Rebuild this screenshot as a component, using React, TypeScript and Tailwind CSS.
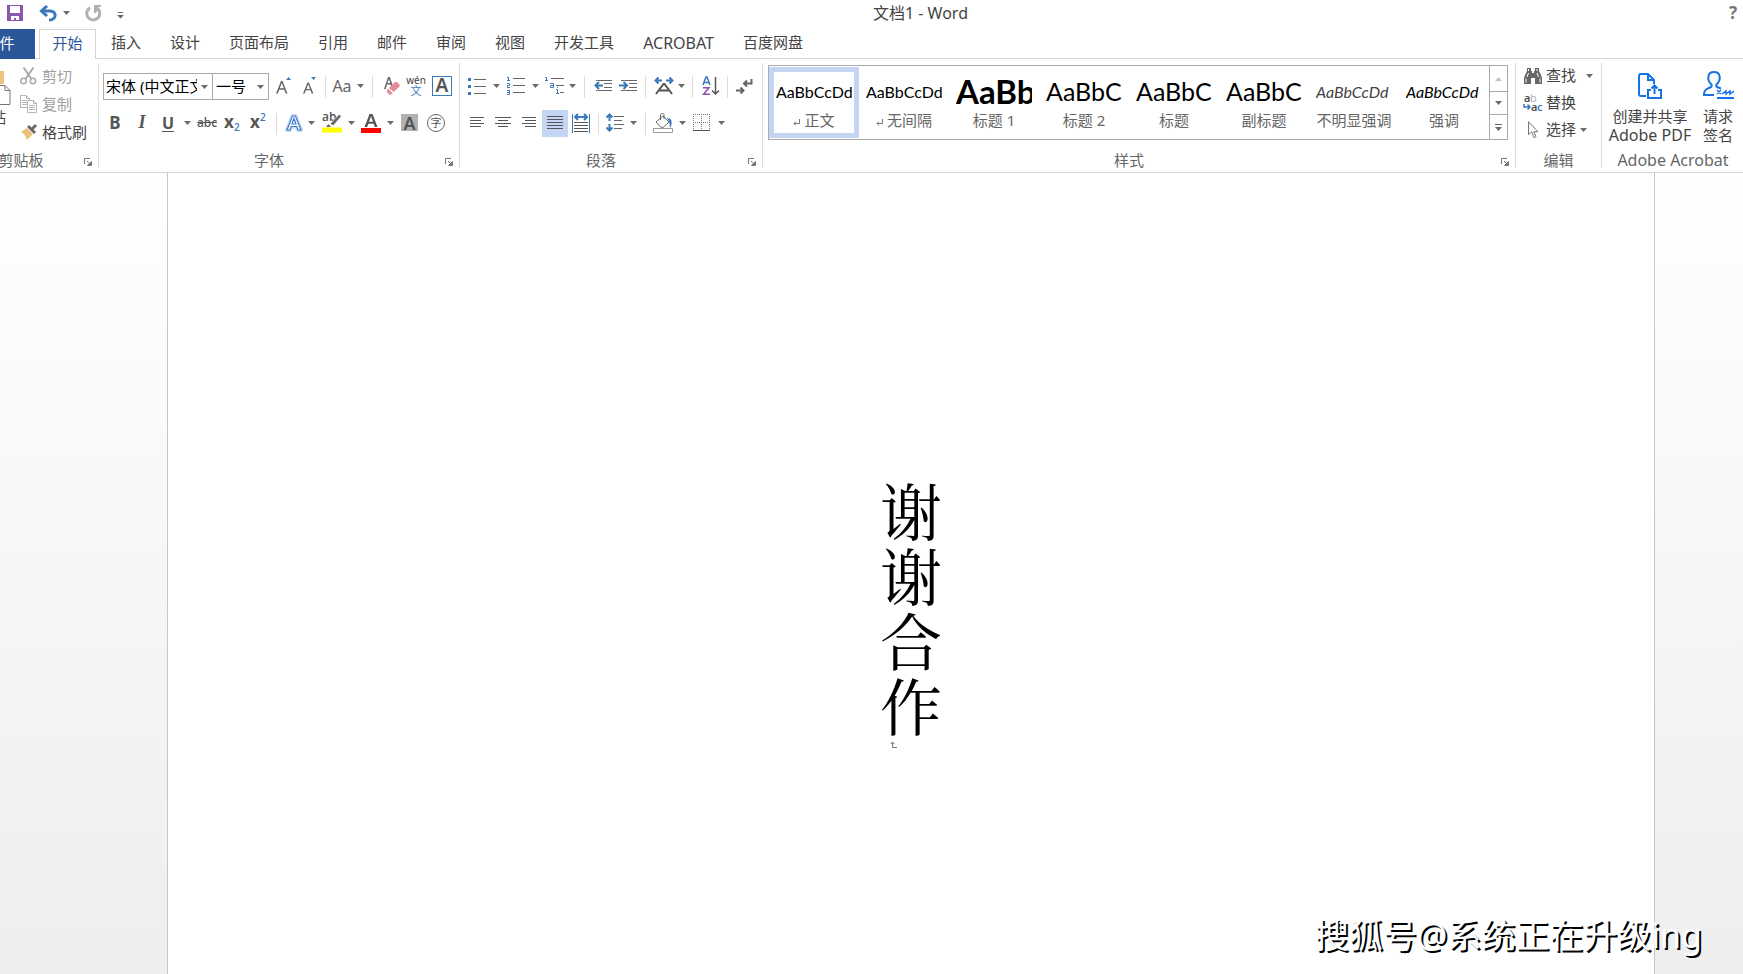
import React from 'react';
import clsx from 'clsx';

type Tone = 'gray' | 'light';

const Caret: React.FC<{ tone?: Tone }> = ({ tone = 'gray' }) => (
  <svg width="7" height="4" viewBox="0 0 7 4" className={tone === 'gray' ? 'text-[#6b6b6b]' : 'text-[#c3c3c3]'}>
    <path d="M0 0h7L3.5 4z" fill="currentColor" />
  </svg>
);

const Tool: React.FC<{ label: string; w: string; active?: boolean; children?: React.ReactNode }> = ({ label, w, active, children }) => (
  <button aria-label={label} title={label} className={clsx('flex h-[27px] shrink-0 items-center justify-center pb-[2px]', w, active && 'bg-[#c3d5f2]')}>
    {children}
  </button>
);

const Drop: React.FC<{ label: string; w: string }> = ({ label, w }) => (
  <button aria-label={label} className={clsx('flex h-[27px] shrink-0 items-center justify-center pb-[2px]', w)}>
    <Caret />
  </button>
);

const Split: React.FC<{ w: string }> = ({ w }) => (
  <div className={clsx('flex h-[22px] shrink-0 justify-center', w)}>
    <div className="w-px bg-[#dcdcdc]" />
  </div>
);

interface GroupProps {
  title: string;
  className?: string;
  launcher?: boolean;
  latin?: boolean;
  children: React.ReactNode;
}

const Group: React.FC<GroupProps> = ({ title, className, launcher, latin, children }) => (
  <section className={clsx('flex flex-col', className)}>
    <div className="flex-1">{children}</div>
    <div className="flex h-[25px] items-center">
      <h2 className={clsx('flex-1 whitespace-nowrap text-center leading-5 text-[#666]', latin ? 'text-[16px]' : 'text-[15px]')}>{title}</h2>
      {launcher && (
        <button aria-label={`${title}设置`} className="flex w-5 justify-center pt-1">
          <svg width="8" height="8" viewBox="0 0 8 8" fill="none" stroke="#777">
            <path d="M.5 6V.5H6M3 3l3 3M7.5 3.5v4h-4z" />
            <path d="M7 4v3H4z" fill="#777" />
          </svg>
        </button>
      )}
    </div>
  </section>
);

const Divider = () => <div className="my-1 w-px shrink-0 bg-[#dcdcdc]" />;

const tabs = ['插入', '设计', '页面布局', '引用', '邮件', '审阅', '视图', '开发工具', 'ACROBAT', '百度网盘'];

const styles = [
  { name: '正文', sample: 'AaBbCcDd', look: 'text-[16px] text-black', mark: true },
  { name: '无间隔', sample: 'AaBbCcDd', look: 'text-[16px] text-black', mark: true },
  { name: '标题 1', sample: 'AaBb', look: 'text-[33px] font-bold text-black' },
  { name: '标题 2', sample: 'AaBbC', look: 'text-[25px] text-black' },
  { name: '标题', sample: 'AaBbC', look: 'text-[25px] text-black' },
  { name: '副标题', sample: 'AaBbC', look: 'text-[25px] text-black' },
  { name: '不明显强调', sample: 'AaBbCcDd', look: 'text-[16px] italic text-[#444]' },
  { name: '强调', sample: 'AaBbCcDd', look: 'text-[16px] italic text-black' },
];

const TitleBar = () => (
  <header className="flex h-[29px] items-start pt-[3px]">
    <div className="flex h-5 w-[130px] items-center pl-[7px]">
      <button aria-label="保存" className="w-8"><SaveIcon /></button>
      <button aria-label="撤消" className="w-6"><UndoIcon /></button>
      <button aria-label="撤消选项" className="w-[22px]"><Caret /></button>
      <button aria-label="重做" className="w-8"><RedoIcon /></button>
      <button aria-label="自定义快速访问工具栏" className="pt-1">
        <svg width="7" height="7" viewBox="0 0 7 7" fill="#6b6b6b"><path d="M1 0h5v1H1zM0 3h7L3.5 6.5z" /></svg>
      </button>
    </div>
    <h1 className="flex-1 text-center text-[16px] leading-5 text-[#444]">文档1 - Word</h1>
    <button aria-label="帮助" className="w-8 pl-[18px] text-left text-[17px] font-bold leading-5 text-[#777]">?</button>
  </header>
);

const Tabs = () => (
  <nav className="-ml-9 flex h-[30px] items-stretch border-b border-[#d4d4d4] text-[15px] text-[#444]">
    <button className="-mb-px w-[71px] bg-[#2b579a] pb-[2px] text-white">文件</button>
    <button className="-mb-px ml-1 w-[57px] border border-b-0 border-[#d4d4d4] bg-white pb-[3px] text-[#2b579a]">开始</button>
    <div className="ml-[15px] flex gap-[29px] whitespace-nowrap pb-[2px]">
      {tabs.map(t => <button key={t} className={t === 'ACROBAT' ? 'text-[16px]' : ''}>{t}</button>)}
    </div>
  </nav>
);

const ClipboardGroup = () => (
  <Group title="剪贴板" launcher className="w-[134px] shrink-0">
    <div className="flex">
      <button className="flex w-[56px] shrink-0 flex-col items-start pl-3 pt-3 text-[15px] leading-5 text-[#444]">
        <span className="-ml-[5px]"><PasteIcon /></span>
        <span className="mt-[1px]">粘贴</span>
      </button>
      <div className="flex flex-col pt-[3px] text-[15px]">
        <button className="flex h-7 items-center gap-[5px] text-[#a0a0a0]"><CutIcon />剪切</button>
        <button className="flex h-7 items-center gap-[5px] text-[#a0a0a0]"><CopyIcon />复制</button>
        <button className="flex h-7 items-center gap-[5px] text-[#444]"><BrushIcon />格式刷</button>
      </div>
    </div>
  </Group>
);

const FontGroup = () => (
  <Group title="字体" launcher className="w-[360px] shrink-0">
    <div className="flex flex-col gap-[10px] pl-1 pt-[14px]">
      <div className="flex items-center">
        <div className="flex h-[27px] w-[110px] border border-[#ababab]">
          <input aria-label="字体" defaultValue="宋体 (中文正文)" className="w-[93px] pb-[1px] pl-[2px] text-[15px] text-black outline-none" />
          <button aria-label="选择字体" className="flex flex-1 items-center justify-center"><Caret /></button>
        </div>
        <div className="-ml-px flex h-[27px] w-[57px] border border-[#ababab]">
          <input aria-label="字号" defaultValue="一号" className="w-[40px] pb-[1px] pl-[3px] text-[15px] text-black outline-none" />
          <button aria-label="选择字号" className="flex flex-1 items-center justify-center"><Caret /></button>
        </div>
        <Tool label="增大字号" w="w-[28px]"><GrowIcon /></Tool>
        <Tool label="减小字号" w="w-[24px]"><ShrinkIcon /></Tool>
        <Split w="w-[8px]" />
        <Tool label="更改大小写" w="w-[26px]"><span className="text-[16px] text-[#666]">Aa</span></Tool>
        <Drop label="大小写选项" w="w-[10px]" />
        <Split w="w-[14px]" />
        <Tool label="清除格式" w="w-[25px]"><EraserIcon /></Tool>
        <Tool label="拼音指南" w="w-[24px]">
          <span className="flex flex-col items-center text-[10px] leading-[9px] text-[#444]">
            <span>wén</span>
            <span className="text-[11px] leading-[11px] text-[#3b78b8]">文</span>
          </span>
        </Tool>
        <Tool label="字符边框" w="w-[28px]">
          <span className="flex size-5 items-center justify-center border border-[#3b78b8] text-[19px] font-semibold leading-none text-[#555]">A</span>
        </Tool>
      </div>
      <div className="flex items-center text-[#555]">
        <Tool label="加粗" w="w-[24px]"><b className="text-[17px]">B</b></Tool>
        <Tool label="倾斜" w="w-[30px]"><i className="font-['Liberation_Serif',serif] text-[18px] font-bold">I</i></Tool>
        <Tool label="下划线" w="w-[22px]"><u className="text-[16px] font-bold underline-offset-2">U</u></Tool>
        <Drop label="下划线选项" w="w-[16px]" />
        <Tool label="删除线" w="w-[24px]"><s className="text-[12px] font-medium">abc</s></Tool>
        <Tool label="下标" w="w-[26px]"><ScriptIcon y={18} /></Tool>
        <Tool label="上标" w="w-[26px]"><ScriptIcon y={8} /></Tool>
        <Split w="w-[11px]" />
        <Tool label="文本效果" w="w-[24px]"><GlowIcon /></Tool>
        <Drop label="文本效果选项" w="w-[11px]" />
        <Tool label="突出显示" w="w-[29px]"><HighlightIcon /></Tool>
        <Drop label="突出显示颜色" w="w-[10px]" />
        <Tool label="字体颜色" w="w-[29px]">
          <svg width="20" height="20" viewBox="0 0 20 20">
            <path d="M3.500 14 8.500 1h3l5 13h-2.700l-1.100-3.200H7.300L6.200 14zM8 8.700h4L10 3.200z" fill="#555" />
            <path d="M0 15h20v5H0z" fill="#f00" />
          </svg>
        </Tool>
        <Drop label="字体颜色选项" w="w-[10px]" />
        <Tool label="字符底纹" w="w-[29px]"><span className="flex size-[17px] items-center justify-center bg-[#b1b1b1] text-[18px] font-semibold leading-none">A</span></Tool>
        <Tool label="带圈字符" w="w-[24px]"><span className="flex size-[18px] items-center justify-center rounded-full border border-[#666] text-[11px] leading-none">字</span></Tool>
      </div>
    </div>
  </Group>
);

const ParagraphGroup = () => (
  <Group title="段落" launcher className="w-[302px] shrink-0">
    <div className="flex flex-col gap-[10px] pl-1 pt-[14px]">
      <div className="flex items-center">
        <Tool label="项目符号" w="w-[26px]"><BulletsIcon /></Tool>
        <Drop label="项目符号库" w="w-[12px]" />
        <Tool label="编号" w="w-[28px]"><NumbersIcon /></Tool>
        <Drop label="编号库" w="w-[10px]" />
        <Tool label="多级列表" w="w-[28px]"><LevelsIcon /></Tool>
        <Drop label="列表库" w="w-[9px]" />
        <Split w="w-[14px]" />
        <Tool label="减少缩进量" w="w-[24px]"><IndentIcon left /></Tool>
        <Tool label="增加缩进量" w="w-[26px]"><IndentIcon /></Tool>
        <Split w="w-[9px]" />
        <Tool label="中文版式" w="w-[27px]"><AsianLayoutIcon /></Tool>
        <Drop label="中文版式选项" w="w-[8px]" />
        <Split w="w-[14px]" />
        <Tool label="排序" w="w-[24px]"><SortIcon /></Tool>
        <Split w="w-[9px]" />
        <Tool label="显示编辑标记" w="w-[24px]"><MarksIcon /></Tool>
      </div>
      <div className="flex items-center">
        <Tool label="左对齐" w="w-[26px]"><Lines d="M1 1.500h14M1 4.500h11M1 7.500h14M1 10.500h11" /></Tool>
        <Tool label="居中" w="w-[26px]"><Lines d="M0 1.500h16M3 4.500h10M0 7.500h16M3 10.500h10" /></Tool>
        <Tool label="右对齐" w="w-[26px]"><Lines d="M1 1.500h14M4 4.500h11M1 7.500h14M4 10.500h11" /></Tool>
        <Tool label="两端对齐" w="w-[26px]" active><Lines d="M0 .5h16M0 3.500h16M0 6.500h16M0 9.500h16M0 12.500h16" /></Tool>
        <Tool label="分散对齐" w="w-[26px]"><DistributeIcon /></Tool>
        <Split w="w-[9px]" />
        <Tool label="行和段落间距" w="w-[24px]"><SpacingIcon /></Tool>
        <Drop label="间距选项" w="w-[12px]" />
        <Split w="w-[12px]" />
        <Tool label="底纹" w="w-[24px]"><BucketIcon /></Tool>
        <Drop label="底纹颜色" w="w-[14px]" />
        <Tool label="边框" w="w-[24px]"><BordersIcon /></Tool>
        <Drop label="边框选项" w="w-[16px]" />
      </div>
    </div>
  </Group>
);

const StylesGroup = () => (
  <Group title="样式" launcher className="min-w-0 flex-1">
    <div className="ml-[5px] mr-[7px] mt-[6px] flex h-[75px] border border-[#ababab]">
      <div className="grid min-w-0 flex-1 grid-cols-8 py-px">
        {styles.map((s, i) => (
          <button
            key={s.name}
            className={clsx('flex min-w-0 flex-col items-center border-[5px] pt-[3px]', i === 0 ? 'border-[#c3d5f2]' : 'border-transparent')}
          >
            <span className={clsx("flex h-[33px] w-[76px] items-center overflow-hidden whitespace-nowrap font-['Lato',sans-serif] leading-none", s.look)}>
              {s.sample}
            </span>
            <span className="mt-[2px] flex h-5 items-center gap-1 whitespace-nowrap text-[15px] leading-5 text-[#666]">
              {s.mark && (
                <svg width="7" height="7" viewBox="0 0 7 7" fill="none" stroke="#777" className="mt-1"><path d="M6.500 0v4.500H1M3 2.500l-2 2 2 2" /></svg>
              )}
              {s.name}
            </span>
          </button>
        ))}
      </div>
      <div className="grid w-[18px] grid-rows-[26px_23px_1fr] divide-y divide-[#ababab] border-l border-[#ababab]">
        <button aria-label="上一行" className="flex items-center justify-center">
          <span className="rotate-180"><Caret tone="light" /></span>
        </button>
        <button aria-label="下一行" className="flex items-center justify-center"><Caret /></button>
        <button aria-label="其他样式" className="flex items-center justify-center">
          <svg width="7" height="7" viewBox="0 0 7 7" fill="#6b6b6b"><path d="M0 0h7v1H0zM0 3h7L3.500 7z" /></svg>
        </button>
      </div>
    </div>
  </Group>
);

const EditGroup = () => (
  <Group title="编辑" className="w-[85px] shrink-0">
    <div className="flex flex-col pl-2 pt-[3px] text-[15px] text-[#444]">
      <button className="flex h-[27px] items-center"><FindIcon /><span className="ml-1 mr-[10px]">查找</span><Caret /></button>
      <button className="flex h-[27px] items-center"><ReplaceIcon /><span className="ml-[3px]">替换</span></button>
      <button className="flex h-[27px] items-center"><PointerIcon /><span className="ml-1 mr-1">选择</span><Caret /></button>
    </div>
  </Group>
);

const AcrobatGroup = () => (
  <Group title="Adobe Acrobat" latin className="w-[141px] shrink-0 pl-px">
    <div className="flex text-[15px] leading-[19px] text-[#444]">
      <button className="flex w-[94px] flex-col items-center whitespace-nowrap pt-[14px]">
        <SharePdfIcon />
        <span className="mt-[8px]">创建并共享</span>
        <span className="text-[16px]">Adobe PDF</span>
      </button>
      <button className="flex w-[42px] flex-col items-center whitespace-nowrap pt-[12px]">
        <SignIcon />
        <span className="mt-[8px]">请求</span>
        <span>签名</span>
      </button>
    </div>
  </Group>
);

const SaveIcon = () => (
  <svg width="16" height="16" viewBox="0 0 16 16">
    <path d="M0 0h16v16H0z" fill="#8b58ad" />
    <path d="M3 1h10v7H3zM4 11h8v4H9v-2H7v2H4z" fill="#fff" />
  </svg>
);
const UndoIcon = () => (
  <svg width="19" height="17" viewBox="0 0 19 17" fill="none" stroke="#3b78b8" strokeWidth="3">
    <path d="M3 6h8c7 0 7 9-1 9" />
    <path d="M8 1 2.500 6 8 11" />
  </svg>
);
const RedoIcon = () => (
  <svg width="17" height="17" viewBox="0 0 17 17" fill="none" stroke="#b1b1b1" strokeWidth="3">
    <path d="M5 2.800A6.500 6.500 0 1 0 12.500 3.500" />
    <path d="M9 0h7v2h-2.500L11 8H9z" fill="#b1b1b1" stroke="none" />
  </svg>
);
const PasteIcon = () => (
  <svg width="40" height="35" viewBox="0 0 40 35">
    <path d="M3 0h30v13H18v20H3z" fill="#ecc47e" />
    <path d="M18.500 14.500H34l5 5v14H18.500z" fill="#fff" stroke="#777" />
    <path d="M34 14.500v5h5" fill="none" stroke="#777" />
  </svg>
);
const CutIcon = () => (
  <svg width="17" height="18" viewBox="0 0 17 18" fill="none" stroke="#ababab" strokeWidth="1.500">
    <path d="m3.500.5 8 11.500M13.500.5 5.500 12" strokeWidth="2" />
    <circle cx="3.500" cy="14" r="2.700" />
    <circle cx="13" cy="14" r="2.700" />
  </svg>
);
const CopyIcon = () => (
  <svg width="17" height="18" viewBox="0 0 17 18" fill="#fff" stroke="#b5b5b5">
    <path d="M.5.5h6l3 3v9h-9zM6.500.5v3h3M2 5.500h5M2 7.500h5M2 9.500h5" />
    <path d="M7.500 5.500h6l3 3v9h-9zM13.500 5.500v3h3M9 10.500h6M9 12.500h6M9 14.500h6" />
  </svg>
);
const BrushIcon = () => (
  <svg width="17" height="16" viewBox="0 0 17 16">
    <path d="M1 8 7 4l6 6-6 6c-1-4-3-6-6-8z" fill="#ecc07a" />
    <path d="m7 3 2-2 7 7-2 2z" fill="#666" />
    <path d="m11 4 4-4 2 2-4 4z" fill="#666" />
  </svg>
);
const GrowIcon = () => (
  <svg width="16" height="18" viewBox="0 0 16 18">
    <path d="M1 16.500 6 4h1.500l5 12.500h-1.800L9.300 12.800H4.200L2.800 16.500zM4.800 11.300h4L6.800 6z" fill="#666" />
    <path d="M11 3h5l-2.500-3z" fill="#3b78b8" />
  </svg>
);
const ShrinkIcon = () => (
  <svg width="16" height="18" viewBox="0 0 16 18">
    <path d="M2 16.500 6.500 5.500h1.400l4.500 11h-1.700l-1.200-3.200H5l-1.300 3.200zM5.500 11.900h3.500L7.200 7.200z" fill="#666" />
    <path d="M10 0h5l-2.500 3z" fill="#3b78b8" />
  </svg>
);
const EraserIcon = () => (
  <svg width="16" height="18" viewBox="0 0 16 18">
    <path d="M0 12 4 0h1.800l3 8.500-1.400 1-.8-2H3L1.800 12zM3.500 6h2.700L4.900 2z" fill="#666" />
    <path d="m5 11 5.500-5.500c1-1 2-1 3 0l1.500 1.500c1 1 1 2 0 3L9.500 15z" fill="#e8899a" />
    <path d="m4.200 11.800 4.500 4.500-1.200 1.200H5L3 15.300v-2.200z" fill="#e8899a" />
  </svg>
);
const ScriptIcon: React.FC<{ y: number }> = ({ y }) => (
  <svg width="17" height="20" viewBox="0 0 17 20" className="font-['Open_Sans',sans-serif]">
    <text x="0" y="15" fontSize="17" fontWeight="700" fill="#555">x</text>
    <text x="10" y={y} fontSize="10" fontWeight="600" fill="#3b78b8">2</text>
  </svg>
);
const GlowIcon = () => (
  <svg width="20" height="20" viewBox="0 0 20 20">
    <path d="M3 17 8.500 3h3L17 17h-3l-1.200-3.500H7.200L6 17z" fill="#fff" stroke="#c5dcf5" strokeWidth="4" strokeLinejoin="round" />
    <path d="M3 17 8.500 3h3L17 17h-3l-1.200-3.500H7.200L6 17zM8 11h4l-2-5.500z" fill="#fff" stroke="#3b78c8" strokeWidth="1.200" />
  </svg>
);
const HighlightIcon = () => (
  <svg width="20" height="21" viewBox="0 0 20 21" className="font-['Open_Sans',sans-serif]">
    <text x="0" y="9" fontSize="12" fontWeight="600" fill="#555">ab</text>
    <path d="M4 15h5l-2.500-3z" fill="#666" />
    <path d="m8 12 9-9.500 2.500 1.500-8 9.500z" fill="#666" stroke="#fff" strokeWidth=".6" />
    <path d="M0 15.500h20v5H0z" fill="#ff0" />
  </svg>
);
const BulletsIcon = () => (
  <svg width="18" height="18" viewBox="0 0 18 18">
    <path d="M6 2.500h12M6 9.500h12M6 16.500h12" stroke="#666" />
    <path d="M0 1h3v3H0zM0 8h3v3H0zM0 15h3v3H0z" fill="#3b78b8" />
  </svg>
);
const NumbersIcon = () => (
  <svg width="18" height="19" viewBox="0 0 18 19">
    <path d="M6 2.500h12M6 9.500h12M6 16.500h12" stroke="#666" />
    <path d="M0 1.500h1.500V5M0 4.500h3M0 7.500h2.500v2H.5v2H3M0 14.500h2.500v4H0M0 16.500h2.500" fill="none" stroke="#3b78b8" />
  </svg>
);
const LevelsIcon = () => (
  <svg width="19" height="19" viewBox="0 0 19 19">
    <path d="M6 2.500h13M11 9.500h8M15 16.500h4" stroke="#666" />
    <path d="M0 1.500h1.500V5M0 4.500h3M5 7.500h3.500v4H5.500v-2h3M11 13.500h1.500V18M12 11.500h1M11 17.500h3" fill="none" stroke="#3b78b8" />
  </svg>
);
const IndentIcon: React.FC<{ left?: boolean }> = ({ left }) => (
  <svg width="18" height="12" viewBox="0 0 18 12" fill="none">
    <path d="M2 .5h16M10 3.500h8M10 7.500h8M2 10.500h16" stroke="#666" />
    <path d={left ? 'M9 5.500H1.500M5 2 1.500 5.500 5 9' : 'M0 5.500h8M4.500 2 8 5.500 4.500 9'} stroke="#fff" strokeWidth="4" />
    <path d={left ? 'M9 5.500H1.500M5 2 1.500 5.500 5 9' : 'M0 5.500h8M4.500 2 8 5.500 4.500 9'} stroke="#3b78b8" strokeWidth="2" />
  </svg>
);
const AsianLayoutIcon = () => (
  <svg width="20" height="18" viewBox="0 0 20 18" fill="none">
    <path d="M8 3.500H2M4.500.5l-3 3 3 3M12 3.500h6M15.500.5l3 3-3 3" stroke="#3b78b8" strokeWidth="2" />
    <path d="m2 17 7.500-10h1L18 17M5.500 13.500h9" stroke="#555" strokeWidth="2" />
  </svg>
);
const SortIcon = () => (
  <svg width="18" height="20" viewBox="0 0 18 20" fill="none">
    <path d="m1 9 3-8h1l3 8M2 6.500h5" stroke="#3b78b8" strokeWidth="1.500" />
    <path d="M1 11.800h6L1.500 18.300H8" stroke="#8b4fb0" strokeWidth="1.500" />
    <path d="M13.500 1v17M10 14.500l3.500 3.500 3.500-3.500" stroke="#555" strokeWidth="1.500" />
  </svg>
);
const MarksIcon = () => (
  <svg width="17" height="16" viewBox="0 0 17 16" fill="none" stroke="#666" strokeWidth="2">
    <path d="M15.500 1v4.500H8M11 2.500l-3 3 3 3M0 12.500h7.500M4.500 9.500l3 3-3 3" />
  </svg>
);
const Lines: React.FC<{ d: string }> = ({ d }) => (
  <svg width="16" height="13" viewBox="0 0 16 13" stroke="#555"><path d={d} /></svg>
);
const DistributeIcon = () => (
  <svg width="18" height="20" viewBox="0 0 18 20" fill="none">
    <path d="M.5 1v19M17.500 1v19" stroke="#3b78b8" />
    <path d="M3 4h12M6 1 3 4l3 3M12 1l3 3-3 3" stroke="#3b78b8" strokeWidth="2" />
    <path d="M2 9.500h14M2 12.500h14M2 15.500h14M2 18.500h14" stroke="#555" />
  </svg>
);
const SpacingIcon = () => (
  <svg width="18" height="19" viewBox="0 0 18 19" fill="none">
    <path d="M3.500 1.500V8M.5 4.500l3-3 3 3M3.500 11v6.500M.5 14.500l3 3 3-3" stroke="#3b78b8" strokeWidth="2" />
    <path d="M8 3.500h10M8 7.500h8M8 11.500h10M8 15.500h8" stroke="#666" />
  </svg>
);
const BucketIcon = () => (
  <svg width="20" height="20" viewBox="0 0 20 20" fill="none">
    <path d="m3 9 7-6 6 6-6 5.500L7.500 14z" stroke="#666" />
    <path d="M7.500 7V2c0-2 3.500-2 3.500 0v4" stroke="#666" />
    <path d="M14 5c5 0 6 5 3 10-.5-4 0-6-3-10z" fill="#3b78b8" />
    <path d="M.5 15.500h19v4H.5z" fill="#fff" stroke="#999" />
  </svg>
);
const BordersIcon = () => (
  <svg width="17" height="18" viewBox="0 0 17 18" fill="none" stroke="#777">
    <path d="M0 .5h17M0 8.500h17M.5 0v16M8.500 0v16M16.500 0v16" strokeDasharray="1 1" />
    <path d="M0 16.500h17" stroke="#555" />
  </svg>
);
const FindIcon = () => (
  <svg width="18" height="16" viewBox="0 0 18 16" fill="#666">
    <path d="M3 0h4v3h1v2h2V3h1V0h4v3l2 4 1 3v6h-7v-6H7v6H0v-6l1-3 2-4z" />
    <path d="M4.500 1v2M13 1v2M2 10.500v4M16 10.500v4M4.500 5 3 9M13 5l1.500 4" stroke="#fff" fill="none" />
  </svg>
);
const ReplaceIcon = () => (
  <svg width="20" height="20" viewBox="0 0 20 20" className="-ml-px font-['Open_Sans',sans-serif]">
    <text x="1" y="9" fontSize="11" fontWeight="600" fill="#444">a</text>
    <text x="7" y="9" fontSize="11" fill="#ababab">b</text>
    <text x="8" y="18" fontSize="11" fontWeight="600" fill="#444">a</text>
    <text x="14" y="18" fontSize="11" fontWeight="600" fill="#3b78b8">c</text>
    <path d="M1 11v3h6M4.500 11.500 7 14l-2.500 2.500" fill="none" stroke="#3b78b8" strokeWidth="1.500" />
  </svg>
);
const PointerIcon = () => (
  <svg width="18" height="18" viewBox="0 0 18 18" fill="#fff" stroke="#777">
    <path d="M4.500.7v13l3.200-3 2.300 6 2-1-2.300-5h4.300z" />
  </svg>
);
const SharePdfIcon = () => (
  <svg width="24" height="26" viewBox="0 0 24 26" fill="none" stroke="#1473e6" strokeWidth="2">
    <path d="M8 23H3c-1 0-2-1-2-2V3c0-1 1-2 2-2h7l6 6v4M10 1v6h6" />
    <path d="M13 17h-3v8h13v-8h-3M16.500 21v-8M13.500 15.500l3-3 3 3" />
  </svg>
);
const SignIcon = () => (
  <svg width="32" height="28" viewBox="0 0 32 28" fill="none" stroke="#1473e6" strokeWidth="2">
    <path d="M12 24H2c0-5 2-6 7-8 1-.5 1-2 0-3-4-4-4-12 3-12s7 8 3 12c-1 1-1 2.500 0 3l4 1.500" />
    <path d="M15 27h17" />
    <path d="m15 19 4 4M19 19l-4 4M20 23l4-3v3l4-3v3l4-3" strokeWidth="1.500" />
  </svg>
);

const App: React.FC = () => (
  <div className="relative flex min-h-screen flex-col overflow-hidden bg-white font-['Noto_Sans','Noto_Sans_CJK_SC',sans-serif]">
    <TitleBar />
    <Tabs />
    <div className="-ml-9 flex h-[114px] border-b border-[#d4d4d4]">
      <ClipboardGroup />
      <Divider />
      <FontGroup />
      <Divider />
      <ParagraphGroup />
      <Divider />
      <StylesGroup />
      <Divider />
      <EditGroup />
      <Divider />
      <AcrobatGroup />
    </div>

    <main className="flex flex-1 bg-linear-to-b from-white to-[#eeeeee]">
      <div className="w-[167px] shrink-0" />
      <article className="flex flex-1 flex-col items-center border-x border-[#c6c6c6] bg-white pt-[304px]">
        <div className="w-[62px]">
          <p className="break-all font-['Noto_Serif_CJK_SC','Noto_Sans_CJK_SC',serif] text-[62px] leading-[65px] text-black">谢谢合作</p>
          <svg width="8" height="8" viewBox="0 0 8 8" fill="none" stroke="#777" className="ml-[10px] mt-1">
            <path d="M2.500 1v5.500H7M.5 3l2-2 2 2" />
          </svg>
        </div>
      </article>
      <div className="w-[88px] shrink-0" />
    </main>

    <div className="absolute bottom-[14px] right-[41px] whitespace-nowrap text-[34px] leading-[50px] text-white [text-shadow:2px_2px_0_#000]">
      搜狐号@系统正在升级ing
    </div>
  </div>
);

export default App;
